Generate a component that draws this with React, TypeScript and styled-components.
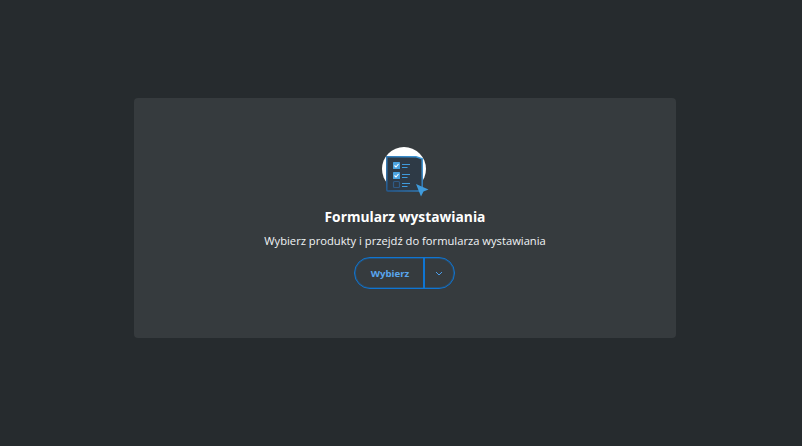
import React from "react";
import styled, { createGlobalStyle } from "styled-components";

const GlobalStyle = createGlobalStyle`
  html, body {
    margin: 0;
    padding: 0;
    height: 100%;
    background: #262b2e;
  }
  body {
    font-family: "Open Sans", "Liberation Sans", sans-serif;
  }
`;

const Page = styled.div`
  width: 802px;
  height: 446px;
  box-sizing: border-box;
  padding: 98px 126px 108px 134px;
`;

const Card = styled.section`
  height: 240px;
  box-sizing: border-box;
  padding-top: 48px;
  background: #363b3e;
  border-radius: 4px;
  display: flex;
  flex-direction: column;
  align-items: center;
`;

const Illustration = styled.svg`
  display: block;
  width: 50px;
  height: 52px;
`;

const Title = styled.h2`
  margin: 9px 0 0;
  font-size: 13.8px;
  line-height: 20px;
  font-weight: 700;
  color: #ffffff;
`;

const Description = styled.p`
  margin: 5px 0 0;
  font-size: 11.2px;
  line-height: 18px;
  font-weight: 400;
  color: #f1f4f6;
`;

const SplitButton = styled.div`
  display: flex;
  height: 32px;
  margin-top: 7px;
  margin-right: 1px;
  box-sizing: border-box;
  border: 1px solid #0f75d2;
  border-radius: 16px;
  box-shadow: inset 0 0 0 1px rgba(15, 117, 210, 0.35);
`;

const MainAction = styled.button`
  width: 68px;
  padding: 0 0 0 2px;
  border: 0;
  background: transparent;
  font-family: inherit;
  font-size: 9.6px;
  font-weight: 700;
  color: #5aa6ee;
`;

const MenuAction = styled.button`
  width: 31px;
  padding: 0 2px 0 0;
  border: 0;
  border-left: 2px solid #0f75d2;
  background: transparent;
  display: flex;
  align-items: center;
  justify-content: center;
`;

const Chevron = styled.svg`
  width: 8px;
  height: 5px;
`;

const CheckRow = ({ y, checked }: { y: number; checked: boolean }) => (
  <g>
    {checked ? (
      <>
        <rect x="13" y={y} width="7" height="7" rx="0.5" fill="#4aa3e0" />
        <path d={`M14.500 ${y + 3.5}l1.500 1.500 2.500-3`} fill="none" stroke="#fff" strokeWidth="1.100" />
      </>
    ) : (
      <rect x="13.500" y={y + 0.5} width="6" height="6" rx="1" fill="none" stroke="#2f5a85" strokeWidth="1.200" />
    )}
    <path d={`M22 ${y + 2.5}h8M22 ${y + 5.500}h5.500`} stroke="#3f9bdc" strokeWidth="1.100" />
  </g>
);

export default function App() {
  return (
    <>
      <GlobalStyle />
      <Page>
        <Card>
          <Illustration viewBox="0 0 50 52">
            <defs>
              <linearGradient id="docEdge" x1="0" y1="1" x2="1" y2="0">
                <stop offset="0" stopColor="#245a90" />
                <stop offset="1" stopColor="#3f9bdc" />
              </linearGradient>
            </defs>
            <circle cx="24" cy="23" r="22" fill="#ffffff" />
            <path d="M6.800 10.800H36l6.200 2V44a1 1 0 0 1-1 1H7.800a1 1 0 0 1-1-1z" fill="#2e3a46" stroke="url(#docEdge)" strokeWidth="1.500" />
            <CheckRow y={16} checked />
            <CheckRow y={26} checked />
            <CheckRow y={35} checked={false} />
            <path d="M36 38l12.500 5.500-5 2-2.500 5z" fill="#3f9bdc" />
          </Illustration>
          <Title>Formularz wystawiania</Title>
          <Description>Wybierz produkty i przejdź do formularza wystawiania</Description>
          <SplitButton>
            <MainAction>Wybierz</MainAction>
            <MenuAction aria-label="Więcej">
              <Chevron viewBox="0 0 8 5">
                <path d="M1 1l3 3 3-3" fill="none" stroke="#4c9eea" strokeWidth="1" />
              </Chevron>
            </MenuAction>
          </SplitButton>
        </Card>
      </Page>
    </>
  );
}
